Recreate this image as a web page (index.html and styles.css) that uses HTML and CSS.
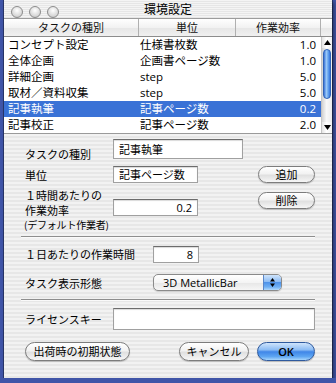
FILE: index.html
```html
<!DOCTYPE html>
<html lang="ja">
<head>
  <meta charset="UTF-8" />
  <meta name="viewport" content="width=device-width, initial-scale=1.0" />
  <title>環境設定</title>
  <link rel="stylesheet" href="styles.css">
</head>
<body>

<div class="window">

  <!-- タイトルバー -->
  <div class="titlebar">
    <div class="lights"><span></span><span></span><span></span></div>
    <div class="title">環境設定</div>
    <div></div>
  </div>

  <!-- タスク一覧 -->
  <div class="table">
    <div class="thead">
      <div class="th c1">タスクの種別</div>
      <div class="th c2">単位</div>
      <div class="th c3">作業効率</div>
      <div class="th c4"></div>
    </div>
    <div class="tbody">
      <div class="rows">
        <div class="tr"><span class="c1">コンセプト設定</span><span class="c2">仕様書枚数</span><span class="c3">1.0</span></div>
        <div class="tr"><span class="c1">全体企画</span><span class="c2">企画書ページ数</span><span class="c3">1.0</span></div>
        <div class="tr"><span class="c1">詳細企画</span><span class="c2">step</span><span class="c3">5.0</span></div>
        <div class="tr"><span class="c1">取材／資料収集</span><span class="c2">step</span><span class="c3">5.0</span></div>
        <div class="tr selected"><span class="c1">記事執筆</span><span class="c2">記事ページ数</span><span class="c3">0.2</span></div>
        <div class="tr"><span class="c1">記事校正</span><span class="c2">記事ページ数</span><span class="c3">2.0</span></div>
      </div>
      <div class="scrollbar">
        <div class="arrow">
          <svg width="7" height="5" viewBox="0 0 7 5"><path d="M3.5 0 L7 5 L0 5 Z" fill="#000"/></svg>
        </div>
        <div class="track"><div class="thumb"></div></div>
        <div class="arrow">
          <svg width="7" height="5" viewBox="0 0 7 5"><path d="M0 0 L7 0 L3.5 5 Z" fill="#000"/></svg>
        </div>
      </div>
    </div>
  </div>

  <!-- 設定フォーム -->
  <div class="form">
    <div class="row r1">
      <div class="label low">タスクの種別</div>
      <div class="field w-name">記事執筆</div>
    </div>

    <div class="row r2">
      <div class="label">単位</div>
      <div class="field w-unit">記事ページ数</div>
      <div class="btn small">追加</div>
    </div>

    <div class="row r3">
      <div class="label multi">
        <div>１時間あたりの</div>
        <div>作業効率</div>
        <div class="note">(デフォルト作業者)</div>
      </div>
      <div class="field w-unit num rate">0.2</div>
      <div class="btn small del">削除</div>
    </div>

    <div class="sep sep1"></div>

    <div class="row r4">
      <div class="label wide">１日あたりの作業時間</div>
      <div class="field w-hours num">8</div>
    </div>

    <div class="row r5">
      <div class="label wide">タスク表示形態</div>
      <div class="popup">
        <span class="popup-text">3D MetallicBar</span>
        <span class="stepper">
          <svg width="7" height="11" viewBox="0 0 7 11">
            <path d="M3.5 1 L6 4.5 L1 4.5 Z" fill="#000"/>
            <path d="M1 6.5 L6 6.5 L3.5 10 Z" fill="#000"/>
          </svg>
        </span>
      </div>
    </div>

    <div class="sep sep2"></div>

    <div class="row r6">
      <div class="label">ライセンスキー</div>
      <div class="field w-key"></div>
    </div>

    <div class="row r7">
      <div class="btn reset">出荷時の初期状態</div>
      <div class="btn cancel">キャンセル</div>
      <div class="btn ok">OK</div>
    </div>
  </div>

</div>

</body>
</html>
```

FILE: styles.css
```css
/* デスクトップとウィンドウ */
body {
  margin: 0;
  background: #4055a8;
  font-family: "Open Sans", "Noto Sans CJK JP", sans-serif;
  color: #000;
  overflow: hidden;
}

.window {
  margin-left: 4px;
  width: 328px;
  height: 378px;
  display: flex;
  flex-direction: column;
  background: #eeeeee;
  box-shadow: 0 0 0 1px rgba(0,0,0,0.35), 2px 2px 4px rgba(0,0,0,0.45);
}

/* タイトルバー */
.titlebar {
  height: 18px;
  display: grid;
  grid-template-columns: 1fr auto 1fr;
  align-items: start;
  background: repeating-linear-gradient(#f4f4f4 0 1px, #e6e6e6 1px 2px);
}

.lights {
  display: flex;
  gap: 6px;
  padding: 6px 0 0 7px;
}

.lights span {
  width: 10px;
  height: 10px;
  border-radius: 50%;
  border: 1px solid #8c8c8c;
  background: radial-gradient(circle at 50% 35%, #ffffff, #d8d8d8 65%, #b8b8b8);
}

.title {
  font-size: 12px;
  line-height: 18px;
  font-family: "Noto Sans CJK JP", sans-serif;
}

/* 一覧 */
.thead {
  height: 19px;
  display: flex;
  box-sizing: border-box;
  border-top: 1px solid #9c9c9c;
  border-bottom: 1px solid #8c8c8c;
  background: linear-gradient(#ffffff, #f2f2f2 50%, #e6e6e6 51%, #f0f0f0);
}

.th {
  box-sizing: border-box;
  border-right: 1px solid #b0b0b0;
  font-size: 11px;
  line-height: 17px;
  text-align: center;
  color: #111;
}

.th.c1 { width: 135px; }
.th.c2 { width: 97px; }
.th.c3 { width: 85px; }
.th.c4 { width: 11px; border-right: none; }

.tbody {
  display: flex;
  height: 96px;
  background: #fff;
  border-bottom: 1px solid #9a9a9a;
  box-shadow: 0 1px 0 #ffffff;
}

.rows {
  width: 317px;
}

.tr {
  display: flex;
  height: 16px;
  font-size: 11.5px;
  line-height: 16px;
}

.tr.selected {
  background: #3a72d6;
  color: #fff;
}

.tr .c1 { width: 135px; padding-left: 4px; box-sizing: border-box; }
.tr .c2 { width: 97px; padding-left: 1px; box-sizing: border-box; }
.tr .c3 { width: 85px; padding-right: 5px; box-sizing: border-box; text-align: right; }

/* スクロールバー */
.scrollbar {
  width: 11px;
  display: flex;
  flex-direction: column;
  background: linear-gradient(to right, #d2d2d2, #f8f8f8 45%, #ececec);
  border-left: 1px solid #c4c4c4;
  box-sizing: border-box;
}

.arrow {
  height: 11px;
  display: flex;
  align-items: center;
  justify-content: center;
  background: linear-gradient(to right, #e4e4e4, #ffffff 45%, #f0f0f0);
}

.track {
  flex: 1;
  padding-top: 1px;
}

.thumb {
  height: 48px;
  margin: 0 1px;
  border-radius: 5px;
  border: 1px solid #2f63b8;
  background: linear-gradient(to right, #3a74d8, #9ccaf8 40%, #6ba8f0 65%, #3474dc);
}

/* フォーム */
.form {
  flex: 1;
  padding: 5px 17px 0 21px;
  background: repeating-linear-gradient(#f2f2f2 0 2px, #e7e7e7 2px 4px);
  font-size: 11px;
}

.row {
  display: flex;
  align-items: center;
}

.label {
  width: 88px;
  font-family: "Noto Sans CJK JP", sans-serif;
  line-height: 14px;
  flex-shrink: 0;
  white-space: nowrap;
}

.label.wide { width: 128px; }

.label.low {
  align-self: flex-end;
  margin-bottom: -2px;
}

.field {
  box-sizing: border-box;
  background: #fff;
  border: 1px solid #a0a0a0;
  border-top-color: #6c6c6c;
  box-shadow: inset 0 1px 1px rgba(0,0,0,0.15);
  padding: 0 5px;
  font-family: "Noto Sans CJK JP", sans-serif;
}

.field.num {
  text-align: right;
  font-family: "Open Sans", sans-serif;
}

.r1 { height: 20px; }
.w-name { width: 130px; height: 20px; line-height: 18px; }

.r2 { height: 17px; margin-top: 7px; }
.w-unit { width: 85px; height: 17px; line-height: 15px; }

.r3 {
  height: 35px;
  margin-top: 5px;
  align-items: flex-start;
}

.label.multi div { line-height: 15px; }
.label.multi .note {
  font-size: 10px;
  line-height: 13px;
  margin-left: -1px;
  letter-spacing: -0.2px;
}

.rate { margin-top: 11px; }
.del { margin-top: 4px; }

.sep {
  border-top: 1px solid #8e8e8e;
  border-bottom: 1px solid #fafafa;
  margin-left: -4px;
}

.sep1 { margin-top: 13px; }

.r4 { height: 16px; margin-top: 8px; }
.w-hours { width: 46px; height: 17px; line-height: 15px; }

.r5 { height: 17px; margin-top: 12px; }

.popup {
  width: 129px;
  height: 17px;
  box-sizing: border-box;
  display: flex;
  border: 1px solid #8a8a8a;
  border-radius: 5px;
  overflow: hidden;
  background: linear-gradient(#ffffff, #f4f4f4 50%, #e6e6e6 51%, #f6f6f6);
  box-shadow: 0 1px 1px rgba(0,0,0,0.15);
}

.popup-text {
  flex: 1;
  padding-left: 9px;
  line-height: 15px;
}

.stepper {
  width: 17px;
  display: flex;
  align-items: center;
  justify-content: center;
  border-left: 1px solid #5a86c8;
  background: linear-gradient(#cfe4fb, #8dbcf4 45%, #4f93ea 50%, #6fb0f4 80%, #b4dafc);
}

.sep2 { margin-top: 8px; }

.r6 { height: 22px; margin-top: 7px; }
.w-key { flex: 1; height: 22px; }

.r7 { height: 19px; margin-top: 12px; }

/* ボタン */
.btn {
  box-sizing: border-box;
  height: 17px;
  border: 1px solid #7c7c7c;
  border-radius: 9px;
  background: linear-gradient(#ffffff, #f2f2f2 45%, #e0e0e0 55%, #f6f6f6);
  box-shadow: 0 1px 1px rgba(0,0,0,0.2);
  text-align: center;
  line-height: 15px;
  font-family: "Noto Sans CJK JP", sans-serif;
  font-size: 11px;
}

.btn.small {
  width: 57px;
  margin-left: auto;
}

.r7 .btn {
  height: 19px;
  line-height: 17px;
  border-radius: 10px;
}

.btn.reset { width: 105px; }
.btn.cancel { width: 70px; margin-left: auto; }

.btn.ok {
  width: 58px;
  margin-left: 8px;
  border-color: #2f5a9e;
  background: linear-gradient(#cfe4fb, #8cbcf4 40%, #3f86e8 52%, #5ea6f2 80%, #a8d6fc);
  font-family: "Open Sans", sans-serif;
  font-weight: 600;
}
```
